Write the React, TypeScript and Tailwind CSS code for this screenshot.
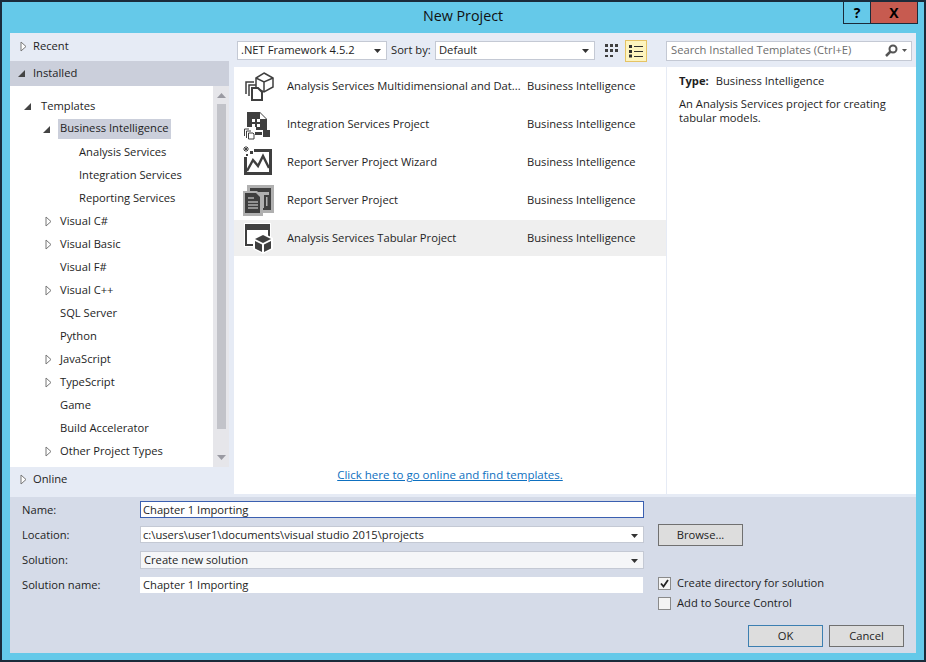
import React from "react";

const font = { fontFamily: '"Open Sans", "Noto Sans", sans-serif' };

const Open = () => (
  <svg width="9" height="9" viewBox="0 0 9 9" className="shrink-0">
    <path d="M8 1V8H1Z" fill="#444" />
  </svg>
);
const Closed = () => (
  <svg width="7" height="11" viewBox="0 0 7 11" className="shrink-0">
    <path d="M1 1L6 5.5L1 10Z" fill="#fff" stroke="#777" />
  </svg>
);
const Caret = () => (
  <svg width="7" height="4" viewBox="0 0 7 4" className="shrink-0">
    <path d="M0 0H7L3.5 4Z" fill="#333" />
  </svg>
);

const treeRows = [
  { label: "Templates", pad: "pl-[13px]", tri: "open" },
  { label: "Business Intelligence", pad: "pl-[32px]", tri: "open", active: true },
  { label: "Analysis Services", pad: "pl-[69px]" },
  { label: "Integration Services", pad: "pl-[69px]" },
  { label: "Reporting Services", pad: "pl-[69px]" },
  { label: "Visual C#", pad: "pl-[35px]", tri: "closed" },
  { label: "Visual Basic", pad: "pl-[35px]", tri: "closed" },
  { label: "Visual F#", pad: "pl-[50px]" },
  { label: "Visual C++", pad: "pl-[35px]", tri: "closed" },
  { label: "SQL Server", pad: "pl-[50px]" },
  { label: "Python", pad: "pl-[50px]" },
  { label: "JavaScript", pad: "pl-[35px]", tri: "closed" },
  { label: "TypeScript", pad: "pl-[35px]", tri: "closed" },
  { label: "Game", pad: "pl-[50px]" },
  { label: "Build Accelerator", pad: "pl-[50px]" },
  { label: "Other Project Types", pad: "pl-[35px]", tri: "closed" },
];

const CubeIcon = () => (
  <svg width="32" height="32" viewBox="0 0 32 32" fill="none" stroke="#3f3f3f" strokeWidth="1.5">
    <path d="M21 3L30 8V17L21 22L13 18V8Z" />
    <path d="M13 8L21 12L30 8M21 12V22" />
    <path d="M3 24V12H11M6 26V15H13" />
    <path d="M9 18H15L19 22V30H9Z" fill="#fff" strokeWidth="2" />
  </svg>
);
const IntegrationIcon = () => (
  <svg width="32" height="32" viewBox="0 0 32 32">
    <path d="M4 4H17L24 11V22H4Z" fill="#3f3f3f" />
    <path d="M17 5L23 11H17Z" fill="#fff" />
    <rect x="9" y="11" width="3" height="3" fill="#fff" />
    <rect x="14" y="11" width="3" height="3" fill="#fff" />
    <rect x="9" y="16" width="3" height="3" fill="#fff" />
    <rect x="14" y="16" width="3" height="3" fill="#fff" />
    <rect x="0" y="19" width="13" height="13" fill="#fff" />
    <path d="M1.500 28V21H6M3.500 30V23H8" fill="none" stroke="#3f3f3f" />
    <path d="M5.500 25H10L11 26V31H5.500Z" fill="#fff" stroke="#3f3f3f" />
    <rect x="12" y="24" width="7" height="3" fill="#3f3f3f" />
    <rect x="20" y="22" width="7" height="7" fill="#3f3f3f" />
  </svg>
);
const WizardIcon = () => (
  <svg width="32" height="32" viewBox="0 0 32 32">
    <rect x="1" y="3" width="28" height="26" fill="#3f3f3f" />
    <rect x="4" y="6" width="22" height="20" fill="#fff" />
    <path d="M4 25L10 14L15 20L20 10L26 22" fill="none" stroke="#3f3f3f" strokeWidth="2.400" />
    <rect x="0" y="0" width="11" height="11" fill="#fff" />
    <path d="M3 0V6M0 3H6M1 1L5 5M5 1L1 5" stroke="#3f3f3f" />
    <rect x="7" y="5" width="3" height="3" fill="#3f3f3f" />
    <rect x="3" y="8" width="2" height="2" fill="#3f3f3f" />
  </svg>
);
const ReportIcon = () => (
  <svg width="32" height="32" viewBox="0 0 32 32">
    <rect x="4" y="1" width="27" height="28" fill="#b0b0b0" />
    <rect x="7" y="4" width="21" height="22" fill="#3f3f3f" />
    <rect x="9" y="8" width="17" height="16" fill="#b0b0b0" />
    <rect x="21" y="11" width="5" height="13" fill="#3f3f3f" />
    <rect x="23" y="13" width="1.500" height="9" fill="#b0b0b0" />
    <path d="M0 7H14L20 13V32H0Z" fill="#b0b0b0" />
    <path d="M2 9H13L17 13V29H2Z" fill="#3f3f3f" />
    <path d="M5 14H11M5 18H15M5 21H15M5 24H15" stroke="#b0b0b0" strokeWidth="1.400" />
  </svg>
);
const TabularIcon = () => (
  <svg width="32" height="32" viewBox="0 0 32 32">
    <rect x="1" y="1" width="27" height="24" fill="#fff" />
    <rect x="3" y="3" width="23" height="20" fill="none" stroke="#3f3f3f" strokeWidth="2" />
    <rect x="3" y="3" width="23" height="5" fill="#3f3f3f" />
    <rect x="6" y="9" width="19" height="12" fill="#fff" />
    <path d="M20 11L30 16V27L20 32L10 27V16Z" fill="#fff" />
    <path d="M20 13L28 17L20 21L12 17Z" fill="#3f3f3f" />
    <path d="M12 19L19 22.500V30L12 26.500Z" fill="#3f3f3f" />
    <path d="M28 19L21 22.500V30L28 26.500Z" fill="#3f3f3f" />
  </svg>
);

const templates = [
  { name: "Analysis Services Multidimensional and Dat...", icon: <CubeIcon /> },
  { name: "Integration Services Project", icon: <IntegrationIcon /> },
  { name: "Report Server Project Wizard", icon: <WizardIcon /> },
  { name: "Report Server Project", icon: <ReportIcon /> },
  { name: "Analysis Services Tabular Project", icon: <TabularIcon />, active: true },
];

const Sidebar = () => (
  <div className="w-[219px] shrink-0 flex flex-col">
    <div className="h-[28px] flex items-center pl-[10px] pb-[1px] gap-[6px] shrink-0">
      <Closed />
      <span>Recent</span>
    </div>
    <div className="h-[25px] flex items-center pl-[7px] gap-[7px] bg-[#cbcfdb] shrink-0">
      <Open />
      <span>Installed</span>
    </div>
    <div className="h-[381px] flex shrink-0">
      <div className="w-[203px] bg-white pt-[8px]">
        {treeRows.map((r) => (
          <div key={r.label} className={`h-[23px] flex items-center pt-[1px] ${r.pad}`}>
            {r.tri === "open" && (
              <span className="mr-[9px]">
                <Open />
              </span>
            )}
            {r.tri === "closed" && (
              <span className="mr-[8px]">
                <Closed />
              </span>
            )}
            <span className={r.active ? "bg-[#cbcfdb] px-[2px] -ml-[2px] h-[20px] leading-[18px]" : ""}>
              {r.label}
            </span>
          </div>
        ))}
      </div>
      <div className="w-[16px] flex flex-col items-center bg-[#e6e6ea]">
        <svg width="9" height="5" viewBox="0 0 9 5" className="mt-[7px]">
          <path d="M0 5L4.500 0L9 5Z" fill="#9a9aa2" />
        </svg>
        <div className="w-[9px] h-[325px] mt-[6px] bg-[#c2c3c9]" />
        <svg width="9" height="5" viewBox="0 0 9 5" className="mt-auto mb-[7px]">
          <path d="M0 0L4.500 5L9 0Z" fill="#9a9aa2" />
        </svg>
      </div>
    </div>
    <div className="h-[25px] flex items-center pl-[10px] gap-[6px] shrink-0">
      <Closed />
      <span>Online</span>
    </div>
  </div>
);

const Toolbar = () => (
  <div className="h-[34px] flex items-center pl-[3px] pr-[4px] shrink-0 pt-[1px]">
    <div className="w-[150px] h-[19px] bg-white border border-[#c4c9d4] flex items-center pl-[3px] pr-[5px] justify-between">
      <span>.NET Framework 4.5.2</span>
      <Caret />
    </div>
    <span className="ml-[4px] w-[44px]">Sort by:</span>
    <div className="w-[160px] h-[19px] bg-white border border-[#c4c9d4] flex items-center pl-[3px] pr-[5px] justify-between">
      <span>Default</span>
      <Caret />
    </div>
    <svg width="16" height="16" viewBox="0 0 16 16" className="ml-[9px]" fill="#3f3f3f">
      <path d="M1 1h3v3H1zM6 1h3v3H6zM11 1h3v3h-3zM1 6h3v3H1zM6 6h3v3H6zM11 6h3v3h-3zM1 12h3v2H1zM6 12h3v2H6z" />
    </svg>
    <div className="w-[22px] h-[22px] ml-[5px] bg-[#fdf4bf] border border-[#e5c365] flex items-center justify-center">
      <svg width="16" height="14" viewBox="0 0 16 14" fill="#2f2f2f">
        <path d="M1 1h3v3H1zM1 6h3v3H1zM1 10.500h3v3H1zM6 2h9v1H6zM6 7h9v1H6zM6 12h9v1H6z" />
      </svg>
    </div>
    <div className="w-[246px] h-[20px] ml-[19px] bg-white border border-[#c4c9d4] flex items-center pl-[4px] pr-[4px] justify-between text-[#6d6d6d]">
      <span>Search Installed Templates (Ctrl+E)</span>
      <span className="flex items-center gap-[4px]">
        <svg width="13" height="13" viewBox="0 0 13 13" fill="none" stroke="#555" strokeWidth="2">
          <circle cx="8" cy="5" r="3.500" />
          <path d="M5.500 7.500L1 12" strokeWidth="2.500" />
        </svg>
        <svg width="5" height="3" viewBox="0 0 5 3">
          <path d="M0 0H5L2.500 3Z" fill="#555" />
        </svg>
      </span>
    </div>
  </div>
);

const TemplateList = () => (
  <div className="w-[432px] h-[427px] bg-white shrink-0 pt-[1px] flex flex-col">
    <div className="flex flex-col gap-[2px]">
      {templates.map((t) => (
        <div key={t.name} className={`h-[36px] flex items-center pl-[9px] ${t.active ? "bg-[#efefef]" : ""}`}>
          <div className="w-[32px] h-[32px] shrink-0">{t.icon}</div>
          <span className="w-[240px] ml-[12px] overflow-hidden whitespace-nowrap">{t.name}</span>
          <span>Business Intelligence</span>
        </div>
      ))}
    </div>
    <div className="mt-auto mb-[11px] text-center text-[11.5px] text-[#0e70c0] underline">
      Click here to go online and find templates.
    </div>
  </div>
);

const Details = () => (
  <div className="w-[249px] h-[427px] ml-[1px] bg-white px-[12px] pt-[5px]">
    <div className="h-[18px] flex items-center">
      <span className="font-bold">Type:</span>
      <span className="ml-[7px]">Business Intelligence</span>
    </div>
    <p className="mt-[7px] leading-[14px]">
      An Analysis Services project for creating
      <br />
      tabular models.
    </p>
  </div>
);

const Field = ({ label, children }: { label: string; children: React.ReactNode }) => (
  <div className="h-[25px] flex items-center">
    <span className="w-[130px] pl-[12px] pt-[2px] shrink-0">{label}</span>
    {children}
  </div>
);

const Btn = ({ label, width, focus }: { label: string; width: string; focus?: boolean }) => (
  <div className={`${width} h-[22px] bg-[#dddddd] border flex items-center justify-center ${focus ? "border-[#3c7fb1]" : "border-[#707070]"}`}>
    {label}
  </div>
);

const BottomForm = () => (
  <div className="h-[156px] bg-[#d5dbe8] mt-[3px] flex shrink-0">
    <div className="w-[634px] shrink-0">
      <Field label="Name:">
        <div className="w-[504px] h-[17px] bg-white border border-[#3a5fb0] pl-[2px] pt-[2px] flex items-center">
          Chapter 1 Importing
        </div>
      </Field>
      <Field label="Location:">
        <div className="w-[504px] h-[17px] bg-white border border-[#c4c9d4] pl-[2px] pr-[5px] pt-[2px] flex items-center justify-between">
          <span>c:\users\user1\documents\visual studio 2015\projects</span>
          <Caret />
        </div>
      </Field>
      <Field label="Solution:">
        <div className="w-[504px] h-[18px] bg-[#f5f6f8] border border-[#c4c9d4] pl-[3px] pr-[5px] pt-[2px] flex items-center justify-between">
          <span>Create new solution</span>
          <Caret />
        </div>
      </Field>
      <Field label="Solution name:">
        <div className="w-[503px] h-[16px] bg-white pl-[3px] pt-[2px] flex items-center">Chapter 1 Importing</div>
      </Field>
    </div>
    <div className="flex-1 flex flex-col pl-[14px]">
      <div className="mt-[27px]">
        <Btn label="Browse..." width="w-[85px]" />
      </div>
      <div className="mt-[31px] h-[13px] flex items-center">
        <div className="w-[13px] h-[13px] bg-[#f3f3f3] border border-[#8a8a8a] flex items-center justify-center">
          <svg width="9" height="9" viewBox="0 0 9 9" fill="none" stroke="#222" strokeWidth="1.800">
            <path d="M1 4.500L3.500 7.500L8 1" />
          </svg>
        </div>
        <span className="ml-[6px]">Create directory for solution</span>
      </div>
      <div className="mt-[7px] h-[13px] flex items-center">
        <div className="w-[13px] h-[13px] bg-[#f3f3f3] border border-[#8a8a8a]" />
        <span className="ml-[6px]">Add to Source Control</span>
      </div>
      <div className="mt-[15px] flex gap-[6px] pl-[90px]">
        <Btn label="OK" width="w-[75px]" focus />
        <Btn label="Cancel" width="w-[75px]" />
      </div>
    </div>
  </div>
);

export default function App() {
  return (
    <div
      style={font}
      className="w-[926px] h-[662px] bg-[#65c9e9] border-[2px] border-[#1b2b3a] text-[11.2px] text-[#1e1e1e] flex flex-col overflow-hidden"
    >
      <div className="h-[31px] shrink-0 flex relative">
        <div className="flex-1 text-center text-[14.3px] pt-[3px] text-[#111]">New Project</div>
        <div className="absolute top-0 left-[841px] flex h-[22px]">
          <div className="w-[28px] border border-[#1b2b3a] border-t-0 flex items-center justify-center font-bold text-[14px] text-black">?</div>
          <div className="w-[47px] bg-[#c75b50] border border-l-0 border-[#1b2b3a] border-t-0 flex items-center justify-center font-bold text-[14px] text-black">X</div>
        </div>
      </div>
      <div className="ml-[8px] w-[906px] h-[620px] bg-[#e6ebf5] flex flex-col">
        <div className="flex h-[461px] shrink-0">
          <Sidebar />
          <div className="ml-[5px] flex flex-col w-[682px]">
            <Toolbar />
            <div className="flex">
              <TemplateList />
              <Details />
            </div>
          </div>
        </div>
        <BottomForm />
      </div>
    </div>
  );
}
